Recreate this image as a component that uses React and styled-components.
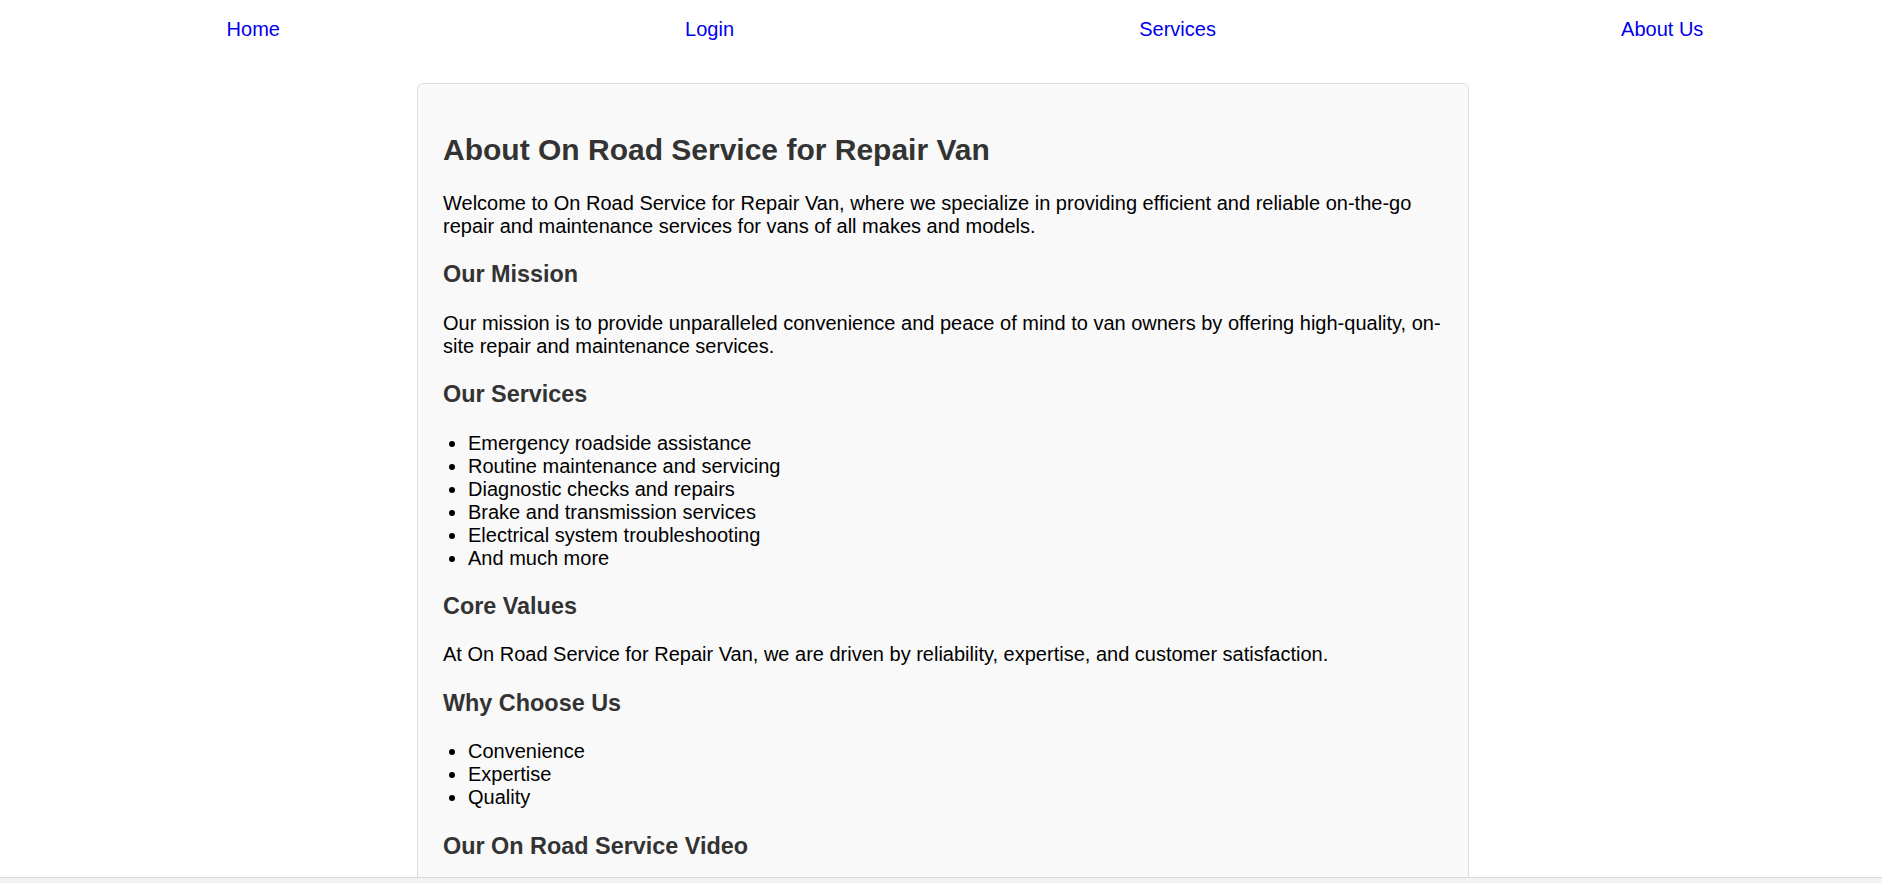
import React from "react";
import styled, { createGlobalStyle } from "styled-components";

const GlobalStyle = createGlobalStyle`
  html, body {
    margin: 0;
    padding: 0;
    background: #ffffff;
    font-family: "Liberation Sans", Arial, sans-serif;
    font-size: 20px;
    color: #000;
    overflow-x: hidden;
  }
`;

const NavBar = styled.nav`
  padding: 18px 0 0;
`;

const NavList = styled.ul`
  list-style: none;
  margin: 0 -24px 0 24px;
  padding: 0;
  display: flex;
  justify-content: space-around;
`;

const NavItem = styled.li`
  line-height: 23px;
`;

const NavLink = styled.a`
  color: #0000ee;
  text-decoration: none;
  font-size: 20px;
`;

const Card = styled.main`
  box-sizing: border-box;
  width: 1052px;
  margin: 42px 0 0 calc(50% - 524px);
  padding: 1px 25px 25px;
  background: #f9f9f9;
  border: 1px solid #dddddd;
  border-radius: 6px;
`;

const Title = styled.h2`
  font-size: 30px;
  font-weight: bold;
  color: #333333;
  margin: 48px 0 25px;
`;

const SubTitle = styled.h3`
  font-size: 23.4px;
  font-weight: bold;
  color: #333333;
  margin: 23.4px 0;
`;

const Text = styled.p`
  margin: 20px 0;
  line-height: 23px;
`;

const List = styled.ul`
  margin: 20px 0;
  padding-left: 25px;
  list-style: disc;
`;

const ListItem = styled.li`
  line-height: 23px;
`;

const BottomEdge = styled.div`
  position: fixed;
  left: 0;
  right: 0;
  bottom: 0;
  height: 5px;
  background: #f2f2f2;
  border-top: 1px solid #dadada;
`;

const navItems = ["Home", "Login", "Services", "About Us"];

const services = [
  "Emergency roadside assistance",
  "Routine maintenance and servicing",
  "Diagnostic checks and repairs",
  "Brake and transmission services",
  "Electrical system troubleshooting",
  "And much more",
];

const reasons = ["Convenience", "Expertise", "Quality"];

export default function App() {
  return (
    <>
      <GlobalStyle />
      <NavBar>
        <NavList>
          {navItems.map((item) => (
            <NavItem key={item}>
              <NavLink href="#">{item}</NavLink>
            </NavItem>
          ))}
        </NavList>
      </NavBar>
      <Card>
        <Title>About On Road Service for Repair Van</Title>
        <Text>
          Welcome to On Road Service for Repair Van, where we specialize in
          providing efficient and reliable on-the-go repair and maintenance
          services for vans of all makes and models.
        </Text>
        <SubTitle>Our Mission</SubTitle>
        <Text>
          Our mission is to provide unparalleled convenience and peace of mind
          to van owners by offering high-quality, on-site repair and
          maintenance services.
        </Text>
        <SubTitle>Our Services</SubTitle>
        <List>
          {services.map((s) => (
            <ListItem key={s}>{s}</ListItem>
          ))}
        </List>
        <SubTitle>Core Values</SubTitle>
        <Text>
          At On Road Service for Repair Van, we are driven by reliability,
          expertise, and customer satisfaction.
        </Text>
        <SubTitle>Why Choose Us</SubTitle>
        <List>
          {reasons.map((r) => (
            <ListItem key={r}>{r}</ListItem>
          ))}
        </List>
        <SubTitle>Our On Road Service Video</SubTitle>
        <Text>&nbsp;</Text>
      </Card>
      <BottomEdge />
    </>
  );
}
